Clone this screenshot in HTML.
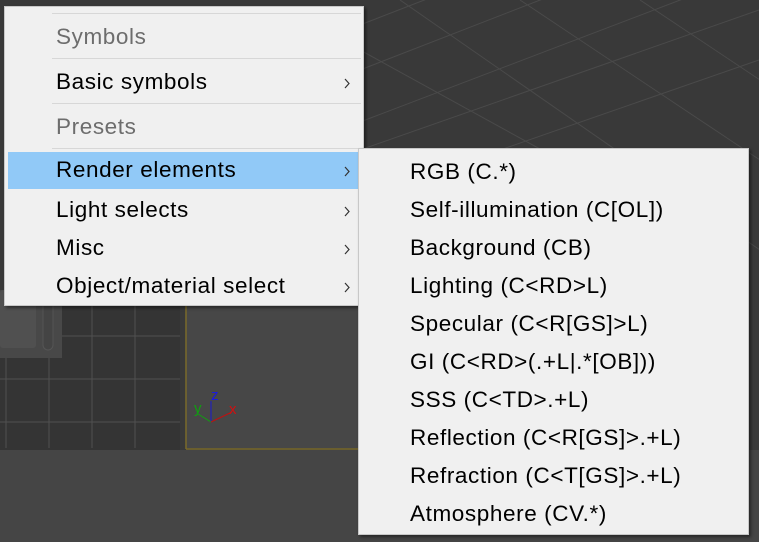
<!DOCTYPE html>
<html><head><meta charset="utf-8"><style>
body{margin:0;width:759px;height:542px;overflow:hidden;background:#454545;position:relative;font-family:"Segoe UI","Liberation Sans",sans-serif;}
.abs{position:absolute}
.menu{position:absolute;background:#f0f0f0;border:1px solid #c8c8c8;box-shadow:2px 2px 3px rgba(0,0,0,.45)}
.it{position:absolute;left:0;right:0;height:38px;line-height:36px;font-size:22.5px;letter-spacing:0.6px;color:#000;white-space:nowrap}
.it span{position:absolute}
.gray{color:#6d6d6d}
.sep{position:absolute;height:1px;background:#d7d7d7}
.arr{position:absolute;right:13px;top:14px;width:6px;height:11px}
</style></head><body>
<div class="abs" style="left:0;top:0;width:759px;height:450px;background:#393939"></div>
<svg class="abs" style="left:0;top:0" width="759" height="450">
<g stroke="#4a4a4a" stroke-width="1">
<line x1="360" y1="25" x2="759" y2="-130"/><line x1="360" y1="70" x2="759" y2="-85"/><line x1="360" y1="122" x2="759" y2="-30"/><line x1="360" y1="150" x2="759" y2="10"/><line x1="500" y1="150" x2="759" y2="60"/>
<line x1="400" y1="0" x2="760" y2="250"/><line x1="520" y1="0" x2="760" y2="160"/><line x1="640" y1="0" x2="760" y2="80"/><line x1="360" y1="50" x2="560" y2="160"/>
</g>
<rect x="0" y="300" width="180" height="150" fill="#343434"/>
<g stroke="#505050"><line x1="6" y1="300" x2="6" y2="448"/><line x1="49" y1="300" x2="49" y2="448"/><line x1="92" y1="300" x2="92" y2="448"/><line x1="135" y1="300" x2="135" y2="448"/>
<line x1="0" y1="336" x2="180" y2="336"/><line x1="0" y1="379" x2="180" y2="379"/><line x1="0" y1="422" x2="180" y2="422"/></g>
<rect x="0" y="290" width="62" height="68" fill="#484848"/>
<rect x="0" y="290" width="36" height="58" rx="3" fill="#505050"/>
<rect x="43" y="290" width="10" height="60" rx="5" fill="#444" stroke="#555"/>
<rect x="186" y="300" width="180" height="148" fill="#474747"/>
<line x1="186" y1="300" x2="186" y2="449" stroke="#7a6a2a" stroke-width="1.5"/>
<line x1="186" y1="449" x2="366" y2="449" stroke="#7a6a2a" stroke-width="1.5"/>
<line x1="211" y1="422" x2="211" y2="401" stroke="#1a1ad0"/>
<line x1="211" y1="422" x2="232" y2="412" stroke="#c01010"/>
<line x1="211" y1="422" x2="198" y2="414" stroke="#10a010"/>
<text x="211" y="400" fill="#1a1ae0" font-size="15" font-family="Liberation Sans">z</text>
<text x="229" y="414" fill="#d01010" font-size="15" font-family="Liberation Sans">x</text>
<text x="194" y="413" fill="#10a010" font-size="15" font-family="Liberation Sans">y</text>
</svg>
<div class="menu" style="left:4px;top:6px;width:358px;height:298px">
<div class="sep" style="left:47px;right:2px;top:6px"></div>
<div class="it gray" style="top:12px"><span style="left:51px">Symbols</span></div>
<div class="sep" style="left:47px;right:2px;top:51px"></div>
<div class="it" style="top:57px"><span style="left:51px">Basic symbols</span><svg class="arr" viewBox="0 0 6 11"><path d="M1 1 L5 5.5 L1 10" fill="none" stroke="#333" stroke-width="1.2"/></svg></div>
<div class="sep" style="left:47px;right:2px;top:96px"></div>
<div class="it gray" style="top:102px"><span style="left:51px">Presets</span></div>
<div class="sep" style="left:47px;right:2px;top:141px"></div>
<div class="it" style="top:145px;left:3px;right:3px;height:37px;background:#91c9f7"><span style="left:48px">Render elements</span><svg class="arr" style="right:10px" viewBox="0 0 6 11"><path d="M1 1 L5 5.5 L1 10" fill="none" stroke="#333" stroke-width="1.2"/></svg></div>
<div class="it" style="top:185px"><span style="left:51px">Light selects</span><svg class="arr" viewBox="0 0 6 11"><path d="M1 1 L5 5.5 L1 10" fill="none" stroke="#333" stroke-width="1.2"/></svg></div>
<div class="it" style="top:223px"><span style="left:51px">Misc</span><svg class="arr" viewBox="0 0 6 11"><path d="M1 1 L5 5.5 L1 10" fill="none" stroke="#333" stroke-width="1.2"/></svg></div>
<div class="it" style="top:261px"><span style="left:51px">Object/material select</span><svg class="arr" viewBox="0 0 6 11"><path d="M1 1 L5 5.5 L1 10" fill="none" stroke="#333" stroke-width="1.2"/></svg></div>
</div>
<div class="menu" style="left:358px;top:148px;width:389px;height:385px">
<div class="it" style="top:5px"><span style="left:51px">RGB (C.*)</span></div>
<div class="it" style="top:43px"><span style="left:51px">Self-illumination (C[OL])</span></div>
<div class="it" style="top:81px"><span style="left:51px">Background (CB)</span></div>
<div class="it" style="top:119px"><span style="left:51px">Lighting (C&lt;RD&gt;L)</span></div>
<div class="it" style="top:157px"><span style="left:51px">Specular (C&lt;R[GS]&gt;L)</span></div>
<div class="it" style="top:195px"><span style="left:51px">GI (C&lt;RD&gt;(.+L|.*[OB]))</span></div>
<div class="it" style="top:233px"><span style="left:51px">SSS (C&lt;TD&gt;.+L)</span></div>
<div class="it" style="top:271px"><span style="left:51px">Reflection (C&lt;R[GS]&gt;.+L)</span></div>
<div class="it" style="top:309px"><span style="left:51px">Refraction (C&lt;T[GS]&gt;.+L)</span></div>
<div class="it" style="top:347px"><span style="left:51px">Atmosphere (CV.*)</span></div>
</div>
</body></html>
